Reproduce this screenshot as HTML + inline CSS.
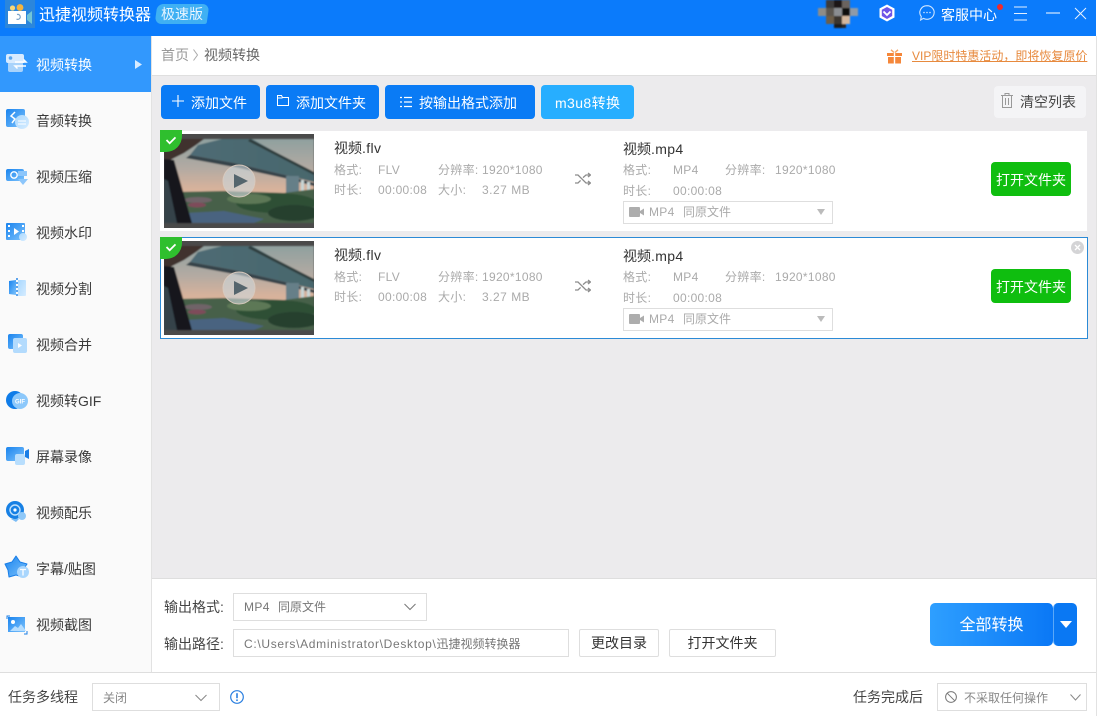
<!DOCTYPE html>
<html lang="zh">
<head>
<meta charset="utf-8">
<title>迅捷视频转换器</title>
<style>
html,body{margin:0;padding:0;background:#fff;}
body{width:1103px;height:716px;position:relative;overflow:hidden;font-family:"Liberation Sans","Noto Sans CJK SC",sans-serif;font-size:14px;color:#333;}
.b{position:absolute;box-sizing:border-box;}
.t{position:absolute;white-space:nowrap;line-height:20px;height:20px;}
.s{font-size:12px;color:#aaa;letter-spacing:.3px;}
.c{letter-spacing:0;}
svg{position:absolute;overflow:visible;}
.btn{position:absolute;box-sizing:border-box;background:#0a7bf5;border-radius:4px;height:34px;top:85px;}
.nav{color:#3a3a3a;left:36px;}
.ok{position:absolute;left:991px;width:80px;height:34px;background:#0fbe0f;border-radius:4px;color:#fff;text-align:center;line-height:36px;}
.sel{position:absolute;box-sizing:border-box;background:#fff;border:1px solid #dedede;}
.m{letter-spacing:.35px;}
</style>
</head>
<body>
<svg width="0" height="0" style="left:0;top:0">
<defs>
<linearGradient id="g" x1="0" y1="0" x2="1" y2="1"><stop offset="0" stop-color="#1a84ee"/><stop offset="1" stop-color="#7cc2fc"/></linearGradient>
<linearGradient id="l" x1="0" y1="0" x2="1" y2="1"><stop offset="0" stop-color="#a9d8ff"/><stop offset="1" stop-color="#d6ecff"/></linearGradient>
<linearGradient id="sky" x1="0" y1="0" x2="0" y2="1"><stop offset="0" stop-color="#8fa09f"/><stop offset=".35" stop-color="#b3aaa2"/><stop offset=".6" stop-color="#d8b29b"/></linearGradient>
<linearGradient id="dk" x1="0" y1="0" x2="1" y2="0"><stop offset="0" stop-color="#4e6b74"/><stop offset="1" stop-color="#47666c"/></linearGradient>
<filter id="bl"><feGaussianBlur stdDeviation=".7"/></filter>
<filter id="av"><feGaussianBlur stdDeviation=".7"/></filter>
<symbol id="thumb" viewBox="0 0 150 94">
<rect width="150" height="94" fill="#4a4a4a"/>
<svg x="0" y="5" width="150" height="84" viewBox="0 0 150 84">
<g filter="url(#bl)">
<rect width="150" height="84" fill="url(#sky)"/>
<polygon points="34,6 58,0 88,0 150,35 150,43 121,36 70,24 26,16" fill="url(#dk)"/>
<polygon points="26,16 70,24 121,36 150,44 150,47 120,39 70,28 22,19" fill="#364249"/>
<polygon points="86,0 150,33 150,36 84,2" fill="#2e3c3c"/>
<rect x="122" y="37" width="13" height="18" fill="#667f88"/>
<rect x="137" y="41" width="3" height="14" fill="#c8d5d5"/>
<rect x="143" y="43" width="3" height="12" fill="#c8d5d5"/>
<polygon points="14,53 60,52 120,54 150,50 150,84 14,84" fill="#47604a"/>
<ellipse cx="112" cy="64" rx="40" ry="10" fill="#2f5036"/>
<ellipse cx="85" cy="60" rx="22" ry="5" fill="#5d7856"/>
<ellipse cx="130" cy="74" rx="26" ry="8" fill="#263f2e"/>
<ellipse cx="34" cy="61" rx="14" ry="3" fill="#6f6468"/>
<ellipse cx="33" cy="66" rx="9" ry="2.5" fill="#7e4c5a"/>
<polygon points="22,74 60,72 100,80 90,84 22,84" fill="#496480"/>
<polygon points="0,0 40,0 32,6 20,14 0,24" fill="#40332e"/>
<polygon points="0,20 10,21 28,84 0,84" fill="#12161a"/>
<polygon points="0,40 4,42 13,84 0,84" fill="#34424a"/>
</g>
<circle cx="75" cy="42" r="16" fill="#cfd6da" fill-opacity=".62" stroke="#d8c9bd" stroke-width="1"/>
<polygon points="70,35 70,49 84,42" fill="#55656d"/>
</svg>
</symbol>
<symbol id="cam" viewBox="0 0 16 12"><rect x="0" y="1" width="11" height="10" rx="1" fill="#adadad"/><polygon points="11,5 15,2.5 15,9.5 11,7" fill="#adadad"/></symbol>
<symbol id="shuf" viewBox="0 0 16 14"><path d="M0 3h3l8 8h4M0 11h3l2.6-2.6M8 5.6L11 3h4M13 1l2.4 2L13 5M13 9l2.4 2L13 13" fill="none" stroke="#8c8c8c" stroke-width="1.3"/></symbol>
</defs>
</svg>

<!-- title bar -->
<div class="b" style="left:0;top:0;width:1096px;height:36px;background:#0b7bfb"></div>
<div class="b" style="left:5px;top:0;width:30px;height:28px;background:#2b86dc"></div>
<svg style="left:7px;top:3px" width="26" height="22" viewBox="0 0 26 22">
<circle cx="5.5" cy="5" r="2.6" fill="#f6d779"/><circle cx="13" cy="4.5" r="3.4" fill="#f4b43f"/>
<rect x="1" y="8" width="18" height="13" fill="#fff"/>
<path d="M10 11.5a2.5 2.5 0 1 1-.5 4.5" fill="none" stroke="#7aa3c8" stroke-width="1.2"/>
<polygon points="20,12 25,8 25,21 20,17" fill="#72c5d8"/>
</svg>
<div class="t" style="left:39px;top:6px;font-size:16px;color:#fff">迅捷视频转换器</div>
<div class="b" style="left:156px;top:4px;width:52px;height:20px;background:#3fb0f3;border-radius:6px 7px 2px 7px;transform:skewX(-8deg)"></div>
<div class="t" style="left:161px;top:4px;color:#e8f5ff">极速版</div>

<!-- avatar mosaic -->
<svg style="left:818px;top:0" width="40" height="28" viewBox="0 0 40 28">
<g filter="url(#av)">
<rect x="0" y="8" width="8" height="8" fill="#8d8c88"/><rect x="8" y="0" width="8" height="8" fill="#3e3a3a"/><rect x="16" y="0" width="8" height="8" fill="#1a1716"/><rect x="24" y="0" width="8" height="8" fill="#6a635e"/>
<rect x="8" y="8" width="8" height="8" fill="#5b5650"/><rect x="16" y="8" width="8" height="8" fill="#8a8d91"/><rect x="24" y="8" width="8" height="8" fill="#0e0d0d"/><rect x="32" y="8" width="8" height="8" fill="#8e9aa8"/>
<rect x="8" y="16" width="8" height="8" fill="#6d5e4c"/><rect x="16" y="16" width="8" height="8" fill="#3a342e"/><rect x="24" y="16" width="8" height="8" fill="#d4b79e"/>
<rect x="16" y="24" width="8" height="4" fill="#1f1c1a"/><rect x="24" y="24" width="4" height="4" fill="#2a2725"/>
</g>
</svg>
<!-- hex -->
<svg style="left:878px;top:4px" width="18" height="18" viewBox="0 0 18 18"><polygon points="9,0.5 16.5,4.5 16.5,13.5 9,17.5 1.5,13.5 1.5,4.5" fill="#fff"/><polygon points="9,3 14.2,5.8 14.2,12 9,15 3.8,12 3.8,5.8" fill="#6f55e8"/><path d="M5.5 7.5L9 11l3.5-3.5" fill="none" stroke="#fff" stroke-width="1.8"/></svg>
<!-- bubble -->
<svg style="left:919px;top:5px" width="16" height="16" viewBox="0 0 16 16"><path d="M8 .7a7.2 6.8 0 1 1-3.6 12.7L1.6 15l.7-3.4A7.2 6.8 0 0 1 8 .7z" fill="none" stroke="#cfe5ff" stroke-width="1.1"/><circle cx="5" cy="7.5" r=".8" fill="#cfe5ff"/><circle cx="8" cy="7.5" r=".8" fill="#cfe5ff"/><circle cx="11" cy="7.5" r=".8" fill="#cfe5ff"/></svg>
<div class="t" style="left:941px;top:5px;color:#fff">客服中心</div>
<div class="b" style="left:997px;top:4px;width:6px;height:6px;border-radius:50%;background:#f22a2a"></div>
<svg style="left:1014px;top:6px" width="14" height="15" viewBox="0 0 14 15"><path d="M0 1h13M0 7.5h13M0 14h13" stroke="#e4f0ff" stroke-width="1"/></svg>
<svg style="left:1046px;top:12px" width="14" height="2" viewBox="0 0 14 2"><path d="M0 1h14" stroke="#fff" stroke-width="1"/></svg>
<svg style="left:1075px;top:8px" width="11" height="11" viewBox="0 0 11 11"><path d="M0 0l11 11M11 0L0 11" stroke="#e8f2ff" stroke-width="1"/></svg>

<!-- sidebar -->
<div class="b" style="left:0;top:36px;width:152px;height:636px;background:#fafafa;border-right:1px solid #e2e2e2"></div>
<div class="b" style="left:0;top:36px;width:151px;height:56px;background:#3298fd"></div>
<svg style="left:6px;top:54px" width="22" height="20" viewBox="0 0 22 20"><rect x="2" y="8" width="15" height="10" rx="2" fill="#a9d3fb"/><path d="M2 0h14a2 2 0 0 1 2 2v7H2a2 2 0 0 1-2-2V2a2 2 0 0 1 2-2z" fill="#d8ebff"/><circle cx="4.5" cy="4" r="1.8" fill="#5aa6ef"/><path d="M9 8h11l-2.5-2.5M20 12H9l2.5 2.5" fill="none" stroke="#fff" stroke-width="1.5"/></svg>
<div class="t" style="left:36px;top:55px;color:#fff">视频转换</div>
<svg style="left:135px;top:60px" width="7" height="9" viewBox="0 0 7 9"><polygon points="0,0 7,4.5 0,9" fill="#d7ebff"/></svg>

<svg style="left:6px;top:109px" width="24" height="20" viewBox="0 0 24 20"><rect x="0" y="0" width="19" height="18" rx="2" fill="url(#g)"/><path d="M9 3L5 7l4 3-3 4" fill="none" stroke="#fff" stroke-width="1.5"/><circle cx="16" cy="13" r="7" fill="url(#l)"/><path d="M12 12h8M12 15h8" stroke="#fff" stroke-width="1"/></svg>
<div class="t nav" style="top:111px">音频转换</div>

<svg style="left:6px;top:167px" width="22" height="18" viewBox="0 0 22 18"><path d="M2 2h14a2 2 0 0 1 2 2v10H2a2 2 0 0 1-2-2V4a2 2 0 0 1 2-2z" fill="url(#g)"/><circle cx="8" cy="8" r="3.2" fill="none" stroke="#fff" stroke-width="1.4"/><rect x="12" y="4" width="9" height="5" fill="#8cc6fb"/><polygon points="12,12 22,12 17,18" fill="#8cc6fb"/></svg>
<div class="t nav" style="top:167px">视频压缩</div>

<svg style="left:6px;top:223px" width="22" height="19" viewBox="0 0 22 19"><rect width="19" height="17" rx="1" fill="url(#g)"/><path d="M2 3h2M2 8h2M2 13h2M16 3h2M16 8h2" stroke="#fff" stroke-width="2"/><polygon points="8,5 13,8.5 8,12" fill="#fff"/><circle cx="17" cy="14" r="4" fill="url(#l)"/></svg>
<div class="t nav" style="top:223px">视频水印</div>

<svg style="left:9px;top:278px" width="18" height="20" viewBox="0 0 18 20"><path d="M0 3l7-1v15l-7-1z" fill="url(#g)"/><path d="M9 2h7a1 1 0 0 1 1 1v14a1 1 0 0 1-1 1H9z" fill="url(#l)"/><path d="M8 0v20" stroke="#1c7fe6" stroke-width="1.4" stroke-dasharray="2 2"/></svg>
<div class="t nav" style="top:279px">视频分割</div>

<svg style="left:8px;top:334px" width="20" height="20" viewBox="0 0 20 20"><rect width="15" height="15" rx="2" fill="url(#g)"/><rect x="5" y="4" width="14" height="15" rx="2" fill="#b3dbfd"/><polygon points="10,9 14,11.5 10,14" fill="#fff"/></svg>
<div class="t nav" style="top:335px">视频合并</div>

<svg style="left:6px;top:391px" width="22" height="19" viewBox="0 0 22 19"><circle cx="9" cy="9" r="9" fill="#0f7ce8"/><circle cx="14" cy="10" r="8" fill="#8cc8fb"/><text x="14" y="12.5" font-size="6" font-weight="700" text-anchor="middle" fill="#fff" font-family="Liberation Sans">GIF</text></svg>
<div class="t nav" style="top:391px">视频转GIF</div>

<svg style="left:6px;top:447px" width="24" height="19" viewBox="0 0 24 19"><rect y="0" width="18" height="14" rx="2" fill="url(#g)"/><path d="M19 4l4-2v10l-4-2z" fill="#1a7ee6"/><rect x="9" y="7" width="10" height="11" rx="2" fill="#b8defd"/></svg>
<div class="t nav" style="top:447px">屏幕录像</div>

<svg style="left:6px;top:501px" width="22" height="22" viewBox="0 0 22 22"><circle cx="9" cy="9" r="9" fill="#1780e4"/><circle cx="9" cy="9" r="5" fill="none" stroke="#bfe0fc" stroke-width="1.4"/><circle cx="9" cy="9" r="1.6" fill="#fff"/><circle cx="16" cy="15" r="4" fill="#8fc8f8"/><path d="M5 18l5 3 3-3z" fill="#7bbcf5"/></svg>
<div class="t nav" style="top:503px">视频配乐</div>

<svg style="left:5px;top:556px" width="26" height="24" viewBox="0 0 26 24"><path d="M11 0l4 6 7 2-4 6v7l-7-2-7 2-1-7-3-6 7-2z" fill="url(#g)" stroke="#1a7fe8" stroke-linejoin="round" stroke-width="1"/><circle cx="18" cy="16" r="6" fill="#a9d6fd"/><path d="M15 13.5h6M18 13.5v6" stroke="#fff" stroke-width="1.3"/></svg>
<div class="t nav" style="top:559px">字幕/贴图</div>

<svg style="left:7px;top:616px" width="20" height="19" viewBox="0 0 20 19"><rect x="1" y="1" width="17" height="15" fill="url(#g)"/><circle cx="6" cy="6" r="2" fill="#fff"/><path d="M3 15l5-5 3 2 3-4 5 7z" fill="#b5ddff"/><path d="M0 3V0h3M17 18h3v-3" stroke="#1b7fe6" fill="none"/></svg>
<div class="t nav" style="top:615px">视频截图</div>

<!-- main -->
<div class="b" style="left:152px;top:36px;width:944px;height:40px;background:#fff;border-bottom:1px solid #dfdfdf"></div>
<div class="b" style="left:152px;top:76px;width:944px;height:503px;background:#ecebed"></div>
<div class="b" style="left:1096px;top:36px;width:1px;height:680px;background:#e2e2e2"></div>
<div class="t" style="left:161px;top:45px;color:#9a9a9a">首页</div>
<svg style="left:193px;top:49px" width="5" height="12" viewBox="0 0 5 12"><path d="M.5.5L4.5 6 .5 11.5" fill="none" stroke="#aaa"/></svg>
<div class="t" style="left:204px;top:45px;color:#666">视频转换</div>
<svg style="left:887px;top:49px" width="15" height="15" viewBox="0 0 15 15"><path d="M0 4h6.8v3H0zM8.2 4H15v3H8.2zM1 8h5.8v6.5H1zM8.2 8H14v6.5H8.2z" fill="#f5873a"/><path d="M7 3.5L4 .8M8 3.5L11 .8" stroke="#f5a566" stroke-width="1.4"/></svg>
<div class="t" style="left:912px;top:46px;font-size:12px;color:#e78a3e;text-decoration:underline">VIP限时特惠活动，即将恢复原价</div>

<!-- toolbar -->
<div class="btn" style="left:161px;width:99px"></div>
<svg style="left:172px;top:95px" width="12" height="12" viewBox="0 0 12 12"><path d="M6 0v12M0 6h12" stroke="#fff" stroke-width="1.1"/></svg>
<div class="t" style="left:191px;top:93px;color:#fff">添加文件</div>
<div class="btn" style="left:266px;width:113px"></div>
<svg style="left:277px;top:95px" width="12" height="11" viewBox="0 0 12 11"><path d="M.5 10.5V.5h4l1 2h6v8z M.5 3h5" fill="none" stroke="#fff" stroke-width="1"/></svg>
<div class="t" style="left:296px;top:93px;color:#fff">添加文件夹</div>
<div class="btn" style="left:385px;width:150px"></div>
<svg style="left:400px;top:96px" width="12" height="12" viewBox="0 0 12 12"><path d="M0 1.5h2M4 1.5h8M0 6h2M4 6h8M0 10.5h2M4 10.5h8" stroke="#fff" stroke-width="1.2"/></svg>
<div class="t" style="left:419px;top:93px;color:#fff">按输出格式添加</div>
<div class="btn" style="left:541px;width:93px;background:#27aeff"></div>
<div class="t" style="left:555px;top:93px;color:#fff;letter-spacing:.4px">m3u8转换</div>
<div class="b" style="left:994px;top:86px;width:92px;height:32px;background:#f4f4f6;border-radius:4px"></div>
<svg style="left:1001px;top:93px" width="12" height="15" viewBox="0 0 12 15"><path d="M0 2.5h12M4 2.5V.5h4v2M1.5 2.5v12h9v-12M4.5 5v7M7.5 5v7" fill="none" stroke="#999"/></svg>
<div class="t" style="left:1020px;top:92px;color:#444">清空列表</div>

<!-- row 1 -->
<div class="b" style="left:160px;top:131px;width:927px;height:100px;background:#fff"></div>
<svg style="left:164px;top:134px" width="150" height="94"><use href="#thumb" width="150" height="94"/></svg>
<div class="b" style="left:160px;top:130px;width:22px;height:22px;background:#2fbf2e;border-radius:0 0 16px 0"></div>
<svg style="left:165px;top:136px" width="12" height="9" viewBox="0 0 13 10"><path d="M1.5 4.5L5 8l6.5-6.5" fill="none" stroke="#fff" stroke-width="2"/></svg>
<div class="t" style="left:334px;top:138px">视频<span class="m">.flv</span></div>
<div class="t s" style="left:334px;top:160px">格式:</div><div class="t s" style="left:378px;top:160px">FLV</div><div class="t s" style="left:438px;top:160px">分辨率:</div><div class="t s" style="left:482px;top:160px">1920*1080</div>
<div class="t s" style="left:334px;top:180px">时长:</div><div class="t s" style="left:378px;top:180px">00:00:08</div><div class="t s" style="left:438px;top:180px">大小:</div><div class="t s" style="left:482px;top:180px;letter-spacing:.5px">3.27 MB</div>
<svg style="left:575px;top:172px" width="16" height="14"><use href="#shuf" width="16" height="14"/></svg>
<div class="t" style="left:623px;top:139px">视频<span class="m">.mp4</span></div>
<div class="t s" style="left:623px;top:160px">格式:</div><div class="t s" style="left:673px;top:160px">MP4</div><div class="t s" style="left:725px;top:160px">分辨率:</div><div class="t s" style="left:775px;top:160px">1920*1080</div>
<div class="t s" style="left:623px;top:181px">时长:</div><div class="t s" style="left:673px;top:181px">00:00:08</div>
<div class="sel" style="left:623px;top:201px;width:210px;height:23px"></div>
<svg style="left:629px;top:206px" width="16" height="12"><use href="#cam" width="16" height="12"/></svg>
<div class="t s" style="left:649px;top:202px">MP4</div><div class="t s c" style="left:683px;top:202px">同原文件</div>
<svg style="left:817px;top:209px" width="8" height="6" viewBox="0 0 8 6"><polygon points="0,0 8,0 4,6" fill="#bbb"/></svg>
<div class="ok" style="top:162px">打开文件夹</div>

<!-- row 2 -->
<div class="b" style="left:160px;top:237px;width:928px;height:102px;background:#fff;border:1px solid #2b8ad6"></div>
<svg style="left:164px;top:241px" width="150" height="94"><use href="#thumb" width="150" height="94"/></svg>
<div class="b" style="left:160px;top:237px;width:22px;height:22px;background:#2fbf2e;border-radius:0 0 16px 0"></div>
<svg style="left:165px;top:243px" width="12" height="9" viewBox="0 0 13 10"><path d="M1.5 4.5L5 8l6.5-6.5" fill="none" stroke="#fff" stroke-width="2"/></svg>
<div class="t" style="left:334px;top:245px">视频<span class="m">.flv</span></div>
<div class="t s" style="left:334px;top:267px">格式:</div><div class="t s" style="left:378px;top:267px">FLV</div><div class="t s" style="left:438px;top:267px">分辨率:</div><div class="t s" style="left:482px;top:267px">1920*1080</div>
<div class="t s" style="left:334px;top:287px">时长:</div><div class="t s" style="left:378px;top:287px">00:00:08</div><div class="t s" style="left:438px;top:287px">大小:</div><div class="t s" style="left:482px;top:287px;letter-spacing:.5px">3.27 MB</div>
<svg style="left:575px;top:279px" width="16" height="14"><use href="#shuf" width="16" height="14"/></svg>
<div class="t" style="left:623px;top:246px">视频<span class="m">.mp4</span></div>
<div class="t s" style="left:623px;top:267px">格式:</div><div class="t s" style="left:673px;top:267px">MP4</div><div class="t s" style="left:725px;top:267px">分辨率:</div><div class="t s" style="left:775px;top:267px">1920*1080</div>
<div class="t s" style="left:623px;top:288px">时长:</div><div class="t s" style="left:673px;top:288px">00:00:08</div>
<div class="sel" style="left:623px;top:308px;width:210px;height:23px"></div>
<svg style="left:629px;top:313px" width="16" height="12"><use href="#cam" width="16" height="12"/></svg>
<div class="t s" style="left:649px;top:309px">MP4</div><div class="t s c" style="left:683px;top:309px">同原文件</div>
<svg style="left:817px;top:316px" width="8" height="6" viewBox="0 0 8 6"><polygon points="0,0 8,0 4,6" fill="#bbb"/></svg>
<div class="ok" style="top:269px">打开文件夹</div>
<svg style="left:1071px;top:241px" width="13" height="13" viewBox="0 0 13 13"><circle cx="6.5" cy="6.5" r="6.5" fill="#d4d4d6"/><path d="M4 4l5 5M9 4l-5 5" stroke="#fff" stroke-width="1.3"/></svg>

<!-- output panel -->
<div class="b" style="left:152px;top:578px;width:944px;height:95px;background:#fff;border-top:1px solid #dedede"></div>
<div class="b" style="left:0;top:672px;width:1096px;height:1px;background:#dedede"></div>
<div class="t" style="left:164px;top:597px;color:#444">输出格式:</div>
<div class="sel" style="left:233px;top:593px;width:194px;height:28px"></div>
<div class="t" style="left:244px;top:597px;font-size:12px;color:#777;letter-spacing:.4px">MP4</div>
<div class="t" style="left:278px;top:597px;font-size:12px;color:#777">同原文件</div>
<svg style="left:404px;top:603px" width="12" height="8" viewBox="0 0 12 8"><path d="M.5 1L6 6.5 11.5 1" fill="none" stroke="#777"/></svg>
<div class="t" style="left:164px;top:634px;color:#444">输出路径:</div>
<div class="sel" style="left:233px;top:629px;width:336px;height:28px"></div>
<div class="t" style="left:244px;top:634px;font-size:12px;color:#777"><span style="letter-spacing:.68px">C:\Users\Administrator\Desktop\</span>迅捷视频转换器</div>
<div class="sel" style="left:579px;top:629px;width:80px;height:28px;border-radius:2px;text-align:center;line-height:26px;color:#333">更改目录</div>
<div class="sel" style="left:669px;top:629px;width:107px;height:28px;border-radius:2px;text-align:center;line-height:26px;color:#333">打开文件夹</div>
<div class="b" style="left:930px;top:603px;width:123px;height:43px;border-radius:5px;background:linear-gradient(90deg,#2e9fff,#0a78f6);color:#fff;font-size:16px;text-align:center;line-height:45px">全部转换</div>
<div class="b" style="left:1053px;top:603px;width:24px;height:43px;border-radius:5px;background:#0a78f3;border-left:1px solid #5aa8f8"></div>
<svg style="left:1060px;top:621px" width="12" height="7" viewBox="0 0 12 7"><polygon points="0,0 12,0 6,7" fill="#fff"/></svg>

<!-- bottom bar -->
<div class="t" style="left:8px;top:687px;color:#444">任务多线程</div>
<div class="sel" style="left:92px;top:683px;width:128px;height:28px"></div>
<div class="t" style="left:103px;top:688px;font-size:12px;color:#888">关闭</div>
<svg style="left:195px;top:694px" width="12" height="8" viewBox="0 0 12 8"><path d="M.5 1L6 6.5 11.5 1" fill="none" stroke="#888"/></svg>
<svg style="left:230px;top:690px" width="14" height="14" viewBox="0 0 14 14"><circle cx="7" cy="7" r="6.3" fill="none" stroke="#2a7fe0" stroke-width="1.2"/><path d="M7 3.2v5" stroke="#2a7fe0" stroke-width="1.6"/><circle cx="7" cy="10.2" r=".9" fill="#2a7fe0"/></svg>
<div class="t" style="left:853px;top:687px;color:#444">任务完成后</div>
<div class="sel" style="left:937px;top:683px;width:150px;height:28px"></div>
<svg style="left:945px;top:691px" width="12" height="12" viewBox="0 0 12 12"><circle cx="6" cy="6" r="5.4" fill="none" stroke="#777"/><path d="M2.2 2.2l7.6 7.6" stroke="#777"/></svg>
<div class="t" style="left:964px;top:688px;font-size:12px;color:#888">不采取任何操作</div>
<svg style="left:1070px;top:694px" width="11" height="7" viewBox="0 0 11 7"><path d="M.5.5L5.5 6 10.5.5" fill="none" stroke="#888"/></svg>
</body>
</html>
